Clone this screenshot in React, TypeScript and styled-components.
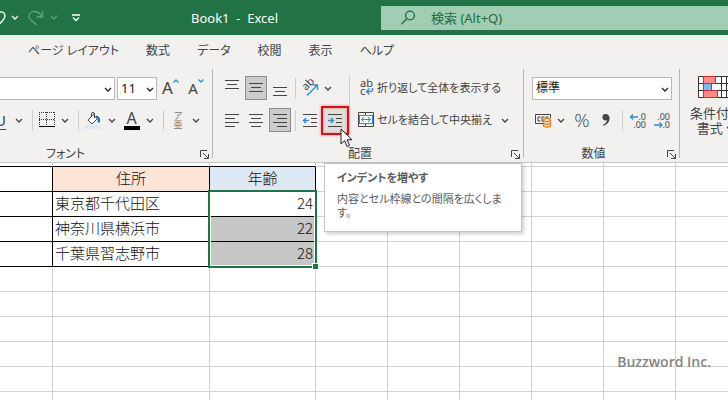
import React from "react";
import styled, { createGlobalStyle, css } from "styled-components";

const ink = "#444444";
const blue = "#2b8fd0";
const green = "#217346";

const GlobalStyle = createGlobalStyle`
  *, *::before, *::after { box-sizing: border-box; }
  html, body, #root { height: 100%; }
  body {
    margin: 0;
    overflow: hidden;
    background: #ffffff;
    color: ${ink};
    font-family: "Noto Sans", "Noto Sans CJK JP", sans-serif;
    font-size: 12px;
    line-height: 16px;
  }
  button, select, input { font: inherit; color: inherit; }
  svg { display: block; flex: none; overflow: visible; }
`;

const Window = styled.div`
  display: flex;
  flex-direction: column;
  min-height: 100%;
  font-feature-settings: "palt";
`;

/* ---------- title bar ---------- */

const TitleBar = styled.header`
  display: flex;
  align-items: center;
  height: 35px;
  background: ${green};
  color: #ffffff;
`;

const QuickAccess = styled.div`
  display: flex;
  align-items: center;
  flex: none;
  width: 191px;
`;

const QuickButton = styled.button<{ $w: number; $dim?: boolean }>`
  display: flex;
  align-items: center;
  justify-content: center;
  width: ${(p) => p.$w}px;
  height: 24px;
  padding: 0;
  border: 0;
  background: none;
  color: #ffffff;
  opacity: ${(p) => (p.$dim ? 0.3 : 1)};
`;

const Title = styled.h1`
  flex: none;
  width: 190px;
  margin: 0;
  font-size: 13px;
  font-weight: 400;
  white-space: pre;
`;

const Search = styled.label`
  display: flex;
  align-items: center;
  gap: 16px;
  flex: 1;
  min-width: 0;
  height: 24px;
  padding-left: 20px;
  background: #a0cdb3;
  color: #1f6b42;
`;

const SearchInput = styled.input`
  flex: 1;
  min-width: 0;
  padding: 0;
  border: 0;
  outline: 0;
  background: none;
  font-size: 13px;
  &::placeholder { color: #1f6b42; opacity: 1; }
`;

/* ---------- ribbon ---------- */

const Tabs = styled.nav`
  display: flex;
  gap: 27px;
  align-items: center;
  height: 31px;
  padding-left: 28px;
  background: #f3f1f0;
`;

const Tab = styled.a`
  color: ${ink};
  text-decoration: none;
  white-space: nowrap;
`;

const Ribbon = styled.div`
  display: flex;
  height: 97px;
  padding-top: 3px;
  overflow: hidden;
  background: #f3f1f0;
  border-bottom: 1px solid #c6c6c6;
`;

const Group = styled.section<{ $w: number; $left?: number }>`
  display: flex;
  flex-direction: column;
  flex: none;
  width: ${(p) => p.$w}px;
  height: 89px;
  padding-left: ${(p) => p.$left ?? 0}px;
  border-right: 1px solid #b8b6b5;
`;

const Body = styled.div`
  display: flex;
  flex: none;
  height: 77px;
  padding-top: 7px;
`;

const Rows = styled.div<{ $left?: number }>`
  display: flex;
  flex-direction: column;
  gap: 8px;
  padding-left: ${(p) => p.$left ?? 0}px;
`;

const Row = styled.div`
  display: flex;
  align-items: center;
  height: 24px;
`;

const GroupFooter = styled.footer`
  display: flex;
  align-items: center;
  flex: none;
  height: 16px;
`;

const GroupName = styled.span<{ $right?: number }>`
  flex: 1;
  padding-right: ${(p) => p.$right ?? 3}px;
  text-align: center;
`;

const Launcher = styled.button`
  width: 12px;
  height: 12px;
  margin-right: 1px;
  padding: 1px;
  border: 0;
  background: none;
`;

const Tool = styled.button<{ $w: number; $pressed?: boolean }>`
  display: flex;
  align-items: center;
  justify-content: center;
  flex: none;
  width: ${(p) => p.$w}px;
  height: 24px;
  padding: 0;
  border: 0;
  background: none;
  color: ${ink};
  ${(p) =>
    p.$pressed &&
    css`
      background: #cdcccb;
      border: 1px solid #8f8e8d;
    `}
`;

const UnderlineTool = styled(Tool)`
  justify-content: flex-end;
  padding-right: 7px;
  overflow: hidden;
  font-size: 15px;
  text-decoration: underline;
  text-underline-offset: 3px;
`;

const GrowTool = styled(Tool)<{ $size: number }>`
  align-items: flex-start;
  font-size: ${(p) => p.$size}px;
  line-height: 24px;
  svg { margin-top: 3px; }
`;

const ColorTool = styled(Tool)`
  flex-direction: column;
  font-size: 16px;
  line-height: 14px;
  &::after {
    content: "";
    width: 16px;
    height: 4px;
    margin-top: 1px;
    background: #000000;
  }
`;

const RubyTool = styled(Tool)`
  flex-direction: column;
  color: #777777;
  font-size: 9px;
  line-height: 9px;
`;

const PercentTool = styled(Tool)`
  font-family: "Open Sans", sans-serif;
  font-size: 19px;
  font-weight: 300;
`;

const CaptionTool = styled.button`
  display: flex;
  align-items: center;
  gap: 3px;
  height: 24px;
  padding: 0;
  border: 0;
  background: none;
  font-size: 11px;
  white-space: nowrap;
`;

const HighlightTool = styled(Tool)`
  position: relative;
  height: 29px;
  border: 2px solid #d3121c;
  background: #e1dfde;
  box-shadow: 0 0 3px #e88a8c, inset 0 0 3px #e88a8c;
`;

const Pointer = styled.svg`
  position: absolute;
  z-index: 3;
  top: 20px;
  left: 17px;
`;

const RowRule = styled.span`
  flex: none;
  width: 1px;
  height: 21px;
  margin: 0 2px 0 7px;
  background: #cfcdcc;
`;

const AlignRule = styled(RowRule)`
  margin: 0 2px 0 4px;
`;

const TallRule = styled.span`
  flex: none;
  width: 1px;
  height: 58px;
  background: #cfcdcc;
`;

const ToolSet = styled.div<{ $left?: number }>`
  display: flex;
  gap: 2px;
  padding-left: ${(p) => p.$left ?? 0}px;
`;

const ComboBox = styled.div<{ $w: number; $open?: boolean }>`
  position: relative;
  display: flex;
  flex: none;
  width: ${(p) => p.$w}px;
  height: 23px;
  border: 1px solid #bab8b7;
  border-left-width: ${(p) => (p.$open ? 0 : 1)}px;
  background: #ffffff;
  color: #222222;
`;

const Select = styled.select<{ $size?: number }>`
  width: 100%;
  padding: 0 16px 0 3px;
  border: 0;
  outline: 0;
  appearance: none;
  background: none;
  font-size: ${(p) => p.$size ?? 12}px;
`;

const ComboArrow = styled.span`
  position: absolute;
  top: 9px;
  right: 2px;
  pointer-events: none;
`;

const FormatButton = styled.button`
  display: flex;
  flex-direction: column;
  align-items: center;
  flex: none;
  padding: 0;
  border: 0;
  background: none;
  font-size: 13px;
  line-height: 15px;
  white-space: nowrap;
  svg { margin-bottom: 7px; }
`;

const FormatLine = styled.span`
  display: flex;
  align-items: center;
  gap: 3px;
  svg { margin: 0; }
`;

/* ---------- sheet ---------- */

const Sheet = styled.main`
  position: relative;
  flex: 1;
`;

const Grid = styled.table`
  width: 100%;
  table-layout: fixed;
  border-collapse: separate;
  border-spacing: 0;
  color: #111111;
  font-family: "Noto Sans CJK JP", sans-serif;
  font-size: 15px;
  font-weight: 300;
  line-height: 20px;
  font-feature-settings: normal;
`;

const Col = styled.col<{ $w?: number }>`
  width: ${(p) => (p.$w ? `${p.$w}px` : "auto")};
`;

const Line = styled.tr<{ $first?: boolean }>`
  height: ${(p) => (p.$first ? 4 : 25)}px;
`;

const cell = css<{ $fill?: string; $right?: boolean; $bottom?: boolean; $end?: boolean }>`
  position: relative;
  padding: 0 2px 2px;
  border-right: 1px solid ${(p) => (p.$right ? "#000000" : "#d2d2d2")};
  border-bottom: 1px solid ${(p) => (p.$bottom ? "#000000" : "#d2d2d2")};
  background: ${(p) => p.$fill ?? "transparent"};
  text-align: ${(p) => (p.$end ? "right" : "left")};
  white-space: nowrap;
  &:last-child { border-right: 0; }
`;

const Cell = styled.td`${cell}`;
const Head = styled.th`
  ${cell}
  font-weight: 300;
  text-align: center;
`;

const Selection = styled.span`
  position: absolute;
  z-index: 1;
  top: -2px;
  left: -2px;
  right: -2px;
  height: 78px;
  border: 2px solid ${green};
  box-shadow: inset 0 0 0 1px #ffffff;
  &::after {
    content: "";
    position: absolute;
    right: -4px;
    bottom: -4px;
    width: 7px;
    height: 7px;
    border: 1px solid #ffffff;
    background: ${green};
  }
`;

const Tooltip = styled.aside`
  position: absolute;
  z-index: 2;
  top: 0;
  left: 324px;
  width: 198px;
  padding: 7px 14px 11px 12px;
  border: 1px solid #c4c4c4;
  background: #ffffff;
  box-shadow: 2px 2px 4px rgba(0, 0, 0, 0.2);
  color: #5c5c5c;
  font-size: 11px;
  line-height: 14px;
`;

const TipTitle = styled.h2`
  margin: 0 0 7px;
  font-size: 11px;
  font-weight: 700;
`;

const TipText = styled.p`
  margin: 0;
`;

const Watermark = styled.span`
  position: absolute;
  right: 17px;
  bottom: 30px;
  color: #858585;
  font-family: "Open Sans", sans-serif;
  font-size: 14px;
  font-weight: 600;
`;

/* ---------- icons ---------- */

const Chevron = () => (
  <svg width="8" height="5" viewBox="0 0 8 5" fill="none" stroke="currentColor" strokeWidth="1.3">
    <path d="M1 1l3 3 3-3" />
  </svg>
);

const bars: Record<string, number[][]> = {
  top: [[1, 0, 15], [3, 4, 13], [1, 8, 15]],
  middle: [[1, 3, 15], [3, 7, 13], [1, 11, 15]],
  bottom: [[1, 7, 15], [3, 11, 13], [1, 15, 15]],
  left: [[1, 2, 15], [1, 6, 11], [1, 10, 15], [1, 14, 11]],
  center: [[1, 2, 15], [3, 6, 13], [1, 10, 15], [3, 14, 13]],
  right: [[1, 2, 15], [5, 6, 15], [1, 10, 15], [5, 14, 15]],
};

const Bars = ({ kind }: { kind: string }) => (
  <svg width="16" height="17" viewBox="0 0 16 17" fill={ink}>
    {bars[kind].map(([x1, y, x2]) => (
      <rect key={y} x={x1} y={y} width={x2 - x1} height="1" />
    ))}
  </svg>
);

const Indent = ({ more }: { more?: boolean }) => (
  <svg width="16" height="17" viewBox="0 0 16 17" fill={ink}>
    <path d="M1 2h14v1H1zM9 6h6v1H9zM9 10h6v1H9zM1 14h14v1H1z" />
    <path
      d={more ? "M1 8.5h5.5M4 6l2.5 2.5L4 11" : "M7 8.5H1.5M4 6L1.5 8.5 4 11"}
      fill="none"
      stroke={blue}
      strokeWidth="1.4"
    />
  </svg>
);

const BordersIcon = () => (
  <svg width="16" height="16" viewBox="0 0 16 16" fill="none" stroke="#333333">
    <path d="M.5 0v14M15.5 0v14M7.5 0v14M0 .5h16M0 7.5h16" strokeDasharray="1 1" />
    <path d="M0 14.5h16" stroke="#000000" />
  </svg>
);

const BucketIcon = () => (
  <svg width="16" height="17" viewBox="0 0 16 17" fill="none" stroke={ink}>
    <rect x="0" y="13" width="16" height="4" fill="#dce9f5" stroke="none" />
    <path d="M8 2.5L3 8.2l4 3.8 5.3-5.3z" fill="#ffffff" />
    <path d="M6.5 5V2a1.5 1.5 0 0 1 3 0v4" />
    <path d="M11 4.5c2.5.2 3.3 2.5 2.7 6" stroke="#2468a8" strokeWidth="2.2" />
  </svg>
);

const Caret = ({ up }: { up?: boolean }) => (
  <svg width="6" height="4" viewBox="0 0 6 4" fill="none" stroke={blue} strokeWidth="1.4">
    <path d={up ? "M.5 3.5L3 1l2.5 2.5" : "M.5.5L3 3 5.5.5"} />
  </svg>
);

const OrientIcon = () => (
  <svg width="18" height="18" viewBox="0 0 18 18" fill="none">
    <text transform="translate(5 12) rotate(-45)" fontSize="11" fill={ink}>ab</text>
    <path d="M6 16.5L16 6.5M11.5 6h5v5" stroke={blue} strokeWidth="1.3" />
  </svg>
);

const WrapIcon = () => (
  <svg width="16" height="18" viewBox="0 0 16 18" fill="none">
    <text x="2" y="8" fontSize="11" fill={ink}>ab</text>
    <text x="2" y="16" fontSize="11" fill={ink}>c</text>
    <path d="M14.5 9v1.5a2 2 0 0 1-2 2H8.5M11.5 9.5l-3 3 3 3" stroke={blue} strokeWidth="1.4" />
  </svg>
);

const MergeIcon = () => (
  <svg width="16" height="16" viewBox="0 0 16 16" fill="none" stroke={ink}>
    <path d="M.5.5h15v14H.5zM7.5.5v3M7.5 11.5v3" />
    <rect x="1.5" y="3.5" width="13" height="8" fill="#ffffff" stroke={blue} />
    <path d="M3.5 7.5h9M6 5L3.5 7.5 6 10M10 5l2.5 2.5L10 10" stroke={blue} />
  </svg>
);

const MoneyIcon = () => (
  <svg width="17" height="16" viewBox="0 0 17 16" fill="none" stroke={ink}>
    <path d="M8 11.5H.5v-9h15V6" />
    <path d="M5.5 5H3v4h2.5M9 9H7V5h2.5M11 7V5h2.5" />
    <path d="M8.5 8v5.5c0 2 7 2 7 0V8" fill="#fbe3c4" stroke="#d9822b" strokeWidth="1.3" />
    <ellipse cx="12" cy="8" rx="3.5" ry="1.5" fill="#fff3e2" stroke="#d9822b" strokeWidth="1.3" />
    <path d="M8.5 10.8c0 2 7 2 7 0" stroke="#d9822b" strokeWidth="1.3" />
  </svg>
);

const CommaIcon = () => (
  <svg width="8" height="14" viewBox="0 0 8 14" fill={ink}>
    <path d="M3.7 1A3.3 3.3 0 0 0 .4 4.3c0 1.900 1.400 3.100 3.100 3.100.6 0 1.100-.1 1.500-.4C4.700 9.200 3.300 10.800 1 11.800l.5 1c3.900-1.300 6.100-4.300 6.100-7.600C7.600 2.700 6 1 3.700 1z" />
  </svg>
);

const DecimalIcon = ({ less }: { less?: boolean }) => (
  <svg width="16" height="17" viewBox="0 0 16 17" fill="none">
    <text x="16" y="8" fontSize="9" textAnchor="end" fill={ink}>{less ? ".00" : ".0"}</text>
    <text x="16" y="16" fontSize="9" textAnchor="end" fill={ink}>{less ? ".0" : ".00"}</text>
    <path
      d={less ? "M0 13h8M5.5 10.5L8 13l-2.5 2.5" : "M8 5H.5M3 2.5L.5 5 3 7.5"}
      stroke={blue}
      strokeWidth="1.4"
    />
  </svg>
);

const LauncherIcon = () => (
  <svg width="9" height="9" viewBox="0 0 9 9" fill="none" stroke={ink}>
    <path d="M.5 7V.5H7M3 3l5 5M8.5 4v4.5H4" />
  </svg>
);

const FormatIcon = () => (
  <svg width="34" height="23" viewBox="0 0 34 23" fill="#ffffff" stroke="#333333">
    <path d="M.5.5h33v21H.5z" />
    <path d="M5.5.5v21M23.5.5v21M28.5.5v21M.5 7.5h33M.5 14.5h33" />
    <rect x="5.5" y=".5" width="12" height="7" fill="#ff8c8c" stroke="#d02c2c" />
    <rect x="5.5" y="7.5" width="8" height="7" fill="#7db9f0" stroke="#1c6fb5" />
    <rect x="5.5" y="14.5" width="14" height="7" fill="#ff8c8c" stroke="#d02c2c" />
  </svg>
);

const Drop = ({ label, w = 12 }: { label: string; w?: number }) => (
  <Tool $w={w} aria-label={label}><Chevron /></Tool>
);

const Footer = ({ name, right }: { name: string; right?: number }) => (
  <GroupFooter>
    <GroupName $right={right}>{name}</GroupName>
    <Launcher aria-label={`${name}の設定`}><LauncherIcon /></Launcher>
  </GroupFooter>
);

/* ---------- data ---------- */

const tabs = ["ページ レイアウト", "数式", "データ", "校閲", "表示", "ヘルプ"];
const people = [
  { address: "東京都千代田区", age: 24 },
  { address: "神奈川県横浜市", age: 22 },
  { address: "千葉県習志野市", age: 28 },
];
const columns = [53, 157, 106, 72, 72, 72, 72, 72];

const Blank = ({ count }: { count: number }) => (
  <>{Array.from({ length: count }, (_, i) => <Cell key={i} />)}</>
);

export default function App() {
  return (
    <Window>
      <GlobalStyle />
      <TitleBar>
        <QuickAccess>
          <QuickButton $w={6} aria-label="元に戻す">
            <svg width="6" height="16" viewBox="0 0 6 16" fill="none" stroke="currentColor" strokeWidth="1.3">
              <path d="M0 2c3-.8 5 1.200 5 4 0 2.500-2 4-5 7.500" />
            </svg>
          </QuickButton>
          <QuickButton $w={18} aria-label="元に戻す履歴"><Chevron /></QuickButton>
          <QuickButton $w={24} $dim aria-label="やり直し">
            <svg width="16" height="16" viewBox="0 0 16 16" fill="none" stroke="currentColor" strokeWidth="1.3">
              <path d="M14.5 1v6h-6M14 6.500C12 3 9.500 1.500 6 1.500 3 1.500 1 3.500 1 6.500c0 3.500 4 5 8 8.500" />
            </svg>
          </QuickButton>
          <QuickButton $w={12} $dim aria-label="やり直し履歴"><Chevron /></QuickButton>
          <QuickButton $w={32} aria-label="クイック アクセス ツール バーのカスタマイズ">
            <svg width="8" height="8" viewBox="0 0 8 8" fill="none" stroke="currentColor" strokeWidth="1.3">
              <path d="M0 1h8M1 3.500l3 3 3-3" />
            </svg>
          </QuickButton>
        </QuickAccess>
        <Title>{"Book1  -  Excel"}</Title>
        <Search>
          <svg width="14" height="15" viewBox="0 0 14 15" fill="none" stroke="currentColor" strokeWidth="1.3">
            <circle cx="9" cy="5.500" r="4.400" />
            <path d="M5.800 8.800L.5 14.200" />
          </svg>
          <SearchInput aria-label="検索" placeholder="検索 (Alt+Q)" />
        </Search>
      </TitleBar>

      <Tabs>
        {tabs.map((t) => <Tab key={t} href="#">{t}</Tab>)}
      </Tabs>

      <Ribbon>
        <Group $w={213}>
          <Body>
            <Rows>
              <Row>
                <ToolSet>
                  <ComboBox $w={115} $open>
                    <Select aria-label="フォント名"><option aria-label="既定" /></Select>
                    <ComboArrow><Chevron /></ComboArrow>
                  </ComboBox>
                  <ComboBox $w={40}>
                    <Select $size={13} aria-label="フォント サイズ"><option>11</option></Select>
                    <ComboArrow><Chevron /></ComboArrow>
                  </ComboBox>
                </ToolSet>
                <GrowTool $w={27} $size={17} aria-label="フォント サイズの拡大">A<Caret up /></GrowTool>
                <GrowTool $w={24} $size={15} aria-label="フォント サイズの縮小">A<Caret /></GrowTool>
              </Row>
              <Row>
                <UnderlineTool $w={13} aria-label="下線">U</UnderlineTool>
                <Drop label="下線の種類" />
                <RowRule />
                <Tool $w={24} aria-label="罫線"><BordersIcon /></Tool>
                <Drop label="罫線の種類" />
                <RowRule />
                <Tool $w={24} aria-label="塗りつぶしの色"><BucketIcon /></Tool>
                <Drop label="塗りつぶしの色の一覧" w={14} />
                <ColorTool $w={25} aria-label="フォントの色">A</ColorTool>
                <Drop label="フォントの色の一覧" />
                <RowRule />
                <RubyTool $w={24} aria-label="ふりがな"><span>ア</span><span>亜</span></RubyTool>
                <Drop label="ふりがなの設定" />
              </Row>
            </Rows>
          </Body>
          <Footer name="フォント" right={68} />
        </Group>

        <Group $w={311}>
          <Body>
            <Rows>
              <Row>
                <ToolSet $left={8}>
                  <Tool $w={22} aria-label="上揃え"><Bars kind="top" /></Tool>
                  <Tool $w={22} $pressed aria-label="上下中央揃え"><Bars kind="middle" /></Tool>
                  <Tool $w={22} aria-label="下揃え"><Bars kind="bottom" /></Tool>
                </ToolSet>
                <AlignRule />
                <Tool $w={24} aria-label="方向"><OrientIcon /></Tool>
                <Drop label="方向の一覧" />
              </Row>
              <Row>
                <ToolSet $left={8}>
                  <Tool $w={22} aria-label="左揃え"><Bars kind="left" /></Tool>
                  <Tool $w={22} aria-label="中央揃え"><Bars kind="center" /></Tool>
                  <Tool $w={22} $pressed aria-label="右揃え"><Bars kind="right" /></Tool>
                </ToolSet>
                <AlignRule />
                <Tool $w={23} aria-label="インデントを減らす"><Indent /></Tool>
                <HighlightTool $w={28} aria-label="インデントを増やす">
                  <Indent more />
                  <Pointer width="13" height="20" viewBox="0 0 13 20">
                    <path d="M1 1v15l3.500-3.300L7 18.500l2.500-1.100L7 11.800h5z" fill="#ffffff" stroke="#222222" />
                  </Pointer>
                </HighlightTool>
              </Row>
            </Rows>
            <TallRule />
            <Rows $left={8}>
              <Row>
                <CaptionTool><WrapIcon />折り返して全体を表示する</CaptionTool>
              </Row>
              <Row>
                <CaptionTool><MergeIcon />セルを結合して中央揃え</CaptionTool>
                <Drop label="結合の種類" w={26} />
              </Row>
            </Rows>
          </Body>
          <Footer name="配置" />
        </Group>

        <Group $w={156}>
          <Body>
            <Rows $left={8}>
              <Row>
                <ComboBox $w={140}>
                  <Select aria-label="表示形式"><option>標準</option></Select>
                  <ComboArrow><Chevron /></ComboArrow>
                </ComboBox>
              </Row>
              <Row>
                <Tool $w={23} aria-label="通貨表示形式"><MoneyIcon /></Tool>
                <Drop label="通貨の一覧" />
                <PercentTool $w={30} aria-label="パーセント スタイル">%</PercentTool>
                <Tool $w={18} aria-label="桁区切りスタイル"><CommaIcon /></Tool>
                <RowRule />
                <Tool $w={26} aria-label="小数点以下の表示桁数を増やす"><DecimalIcon /></Tool>
                <Tool $w={22} aria-label="小数点以下の表示桁数を減らす"><DecimalIcon less /></Tool>
              </Row>
            </Rows>
          </Body>
          <Footer name="数値" />
        </Group>

        <Group $w={90} $left={10}>
          <Body>
            <FormatButton>
              <FormatIcon />
              <span>条件付き</span>
              <FormatLine>書式<Chevron /></FormatLine>
            </FormatButton>
          </Body>
        </Group>
      </Ribbon>

      <Sheet>
        <Grid>
          <colgroup>
            {columns.map((w, i) => <Col key={i} $w={w} />)}
            <Col />
          </colgroup>
          <tbody>
            <Line $first>
              <Cell $bottom /><Cell $bottom /><Cell $bottom />
              <Blank count={6} />
            </Line>
            <Line>
              <Cell $right $bottom />
              <Head $right $bottom $fill="#fce4d7" scope="col">住所</Head>
              <Head $right $bottom $fill="#dce9f4" scope="col">年齢</Head>
              <Blank count={6} />
            </Line>
            {people.map((p, i) => (
              <Line key={p.address}>
                <Cell $right $bottom />
                <Cell $right $bottom>{p.address}</Cell>
                <Cell $right $bottom $end $fill={i > 0 ? "#c6c6c6" : undefined}>
                  {p.age}
                  {i === 0 && <Selection />}
                </Cell>
                <Blank count={6} />
              </Line>
            ))}
            {Array.from({ length: 6 }, (_, i) => (
              <Line key={i}><Blank count={9} /></Line>
            ))}
          </tbody>
        </Grid>
        <Tooltip role="tooltip">
          <TipTitle>インデントを増やす</TipTitle>
          <TipText>内容とセル枠線との間隔を広くします。</TipText>
        </Tooltip>
      </Sheet>
      <Watermark>Buzzword Inc.</Watermark>
    </Window>
  );
}
